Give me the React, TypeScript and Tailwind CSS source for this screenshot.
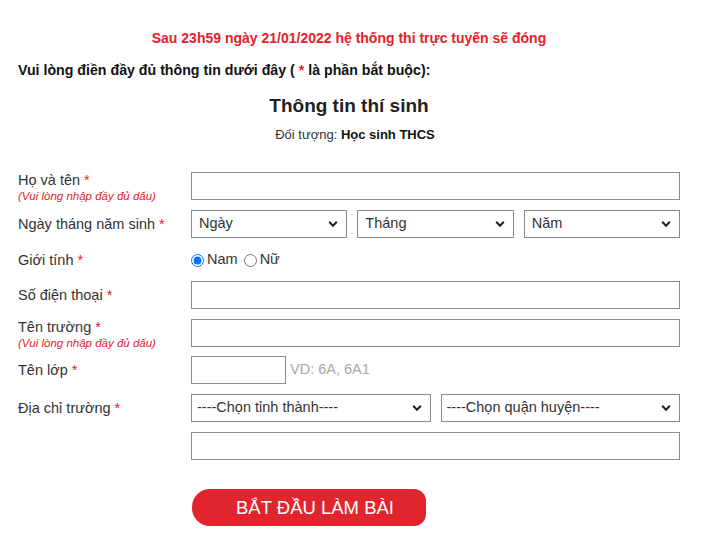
import React from 'react';

const FONT = "font-['Liberation_Sans',Arial,sans-serif]";

const Star = () => <span className="text-[#e8202a]"> *</span>;

const Chevron = () => (
  <svg
    className="pointer-events-none absolute right-[9px] top-1/2 -translate-y-1/2"
    width="10"
    height="7"
    viewBox="0 0 10 7"
    fill="none"
  >
    <path d="M1.2 1.3 5 5.2 8.8 1.3" stroke="#222" strokeWidth="2" />
  </svg>
);

const Select: React.FC<{ label: string; className?: string; pad?: string }> = ({
  label,
  className = '',
  pad = 'pl-[7px]',
}) => (
  <div className={`relative h-[28px] ${className}`}>
    <select
      className={`h-full w-full appearance-none border border-[#8c8c8c] bg-white ${pad} pr-6 text-[14.5px] text-[#333] outline-none`}
      defaultValue=""
    >
      <option value="">{label}</option>
    </select>
    <Chevron />
  </div>
);

const Input: React.FC<{ className?: string }> = ({ className = 'w-full' }) => (
  <input
    type="text"
    className={`h-[28px] border border-[#8c8c8c] bg-white px-2 text-[14px] outline-none ${className}`}
  />
);

const Hint = () => (
  <div className="text-[11.5px] italic leading-[16px] text-[#e8202a]">
    (Vui lòng nhập đầy đủ dấu)
  </div>
);

const Row: React.FC<{
  label: string;
  hint?: boolean;
  className?: string;
  children: React.ReactNode;
}> = ({ label, hint, className = 'h-[28px]', children }) => (
  <div className={`flex ${hint ? 'items-start' : 'items-center'} ${className}`}>
    <div className="w-[173px] shrink-0">
      <div className="text-[14.5px] leading-[16px] text-[#333]">
        {label}
        <Star />
      </div>
      {hint && <Hint />}
    </div>
    <div className="flex-1">{children}</div>
  </div>
);

export default function App() {
  return (
    <div className={`min-h-[552px] w-[704px] bg-white ${FONT} text-[#222]`}>
      <div className="pl-[18px] pr-[24px] pt-[29px]">
        <p className="text-center text-[14px] font-bold leading-[18px] text-[#e8202a]">
          Sau 23h59 ngày 21/01/2022 hệ thống thi trực tuyến sẽ đóng
        </p>
        <p className="mt-[14px] text-[14.2px] font-bold leading-[18px] text-[#111]">
          Vui lòng điền đầy đủ thông tin dưới đây ({' '}
          <span className="text-[#e8202a]">*</span> là phần bắt buộc):
        </p>

        <h2 className="mt-[15px] text-center text-[19px] font-bold leading-[24px] text-[#222]">
          Thông tin thí sinh
        </h2>
        <p className="ml-[12px] mt-[8px] text-center text-[13px] leading-[18px] text-[#333]">
          Đối tượng: <span className="font-bold text-[#111]">Học sinh THCS</span>
        </p>

        <form className="mt-[28px]" onSubmit={e => e.preventDefault()}>
          <Row label="Họ và tên" hint className="h-[28px]">
            <Input />
          </Row>

          <Row label="Ngày tháng năm sinh" className="mt-[10px] h-[28px]">
            <div className="flex gap-[10px]">
              <Select label="Ngày" className="flex-1" />
              <Select label="Tháng" className="flex-1" />
              <Select label="Năm" className="flex-1" />
            </div>
          </Row>

          <Row label="Giới tính" className="mt-[10px] h-[24px]">
            <div className="flex items-center text-[14.5px] text-[#333]">
              <input
                type="radio"
                name="gender"
                defaultChecked
                className="h-[13px] w-[13px]"
              />
              <span className="ml-[3px]">Nam</span>
              <input
                type="radio"
                name="gender"
                className="ml-[6px] h-[13px] w-[13px]"
              />
              <span className="ml-[3px]">Nữ</span>
            </div>
          </Row>

          <Row label="Số điện thoại" className="mt-[9px] h-[28px]">
            <Input />
          </Row>

          <Row label="Tên trường" hint className="mt-[10px] h-[28px]">
            <Input />
          </Row>

          <Row label="Tên lớp" className="mt-[9px] h-[28px]">
            <div className="flex items-center">
              <Input className="w-[95px]" />
              <span className="ml-[4px] text-[14.5px] text-[#a8a8a8]">
                VD: 6A, 6A1
              </span>
            </div>
          </Row>

          <Row label="Địa chỉ trường" className="mt-[10px] h-[28px]">
            <div className="flex gap-[10px]">
              <Select label="----Chọn tỉnh thành----" className="flex-1" pad="pl-[5px]" />
              <Select label="----Chọn quận huyện----" className="flex-1" pad="pl-[5px]" />
            </div>
          </Row>

          <div className="mt-[10px] flex">
            <div className="w-[173px] shrink-0" />
            <div className="flex-1">
              <Input />
            </div>
          </div>

          <div className="mt-[29px] flex">
            <div className="w-[174px] shrink-0" />
            <button
              type="submit"
              className="h-[37px] w-[234px] rounded-l-[18px] rounded-r-[12px] bg-[#e1252f] pl-[44px] text-left text-[18.5px] leading-[37px] text-white"
            >
              BẮT ĐẦU LÀM BÀI
            </button>
          </div>
        </form>
      </div>
    </div>
  );
}
